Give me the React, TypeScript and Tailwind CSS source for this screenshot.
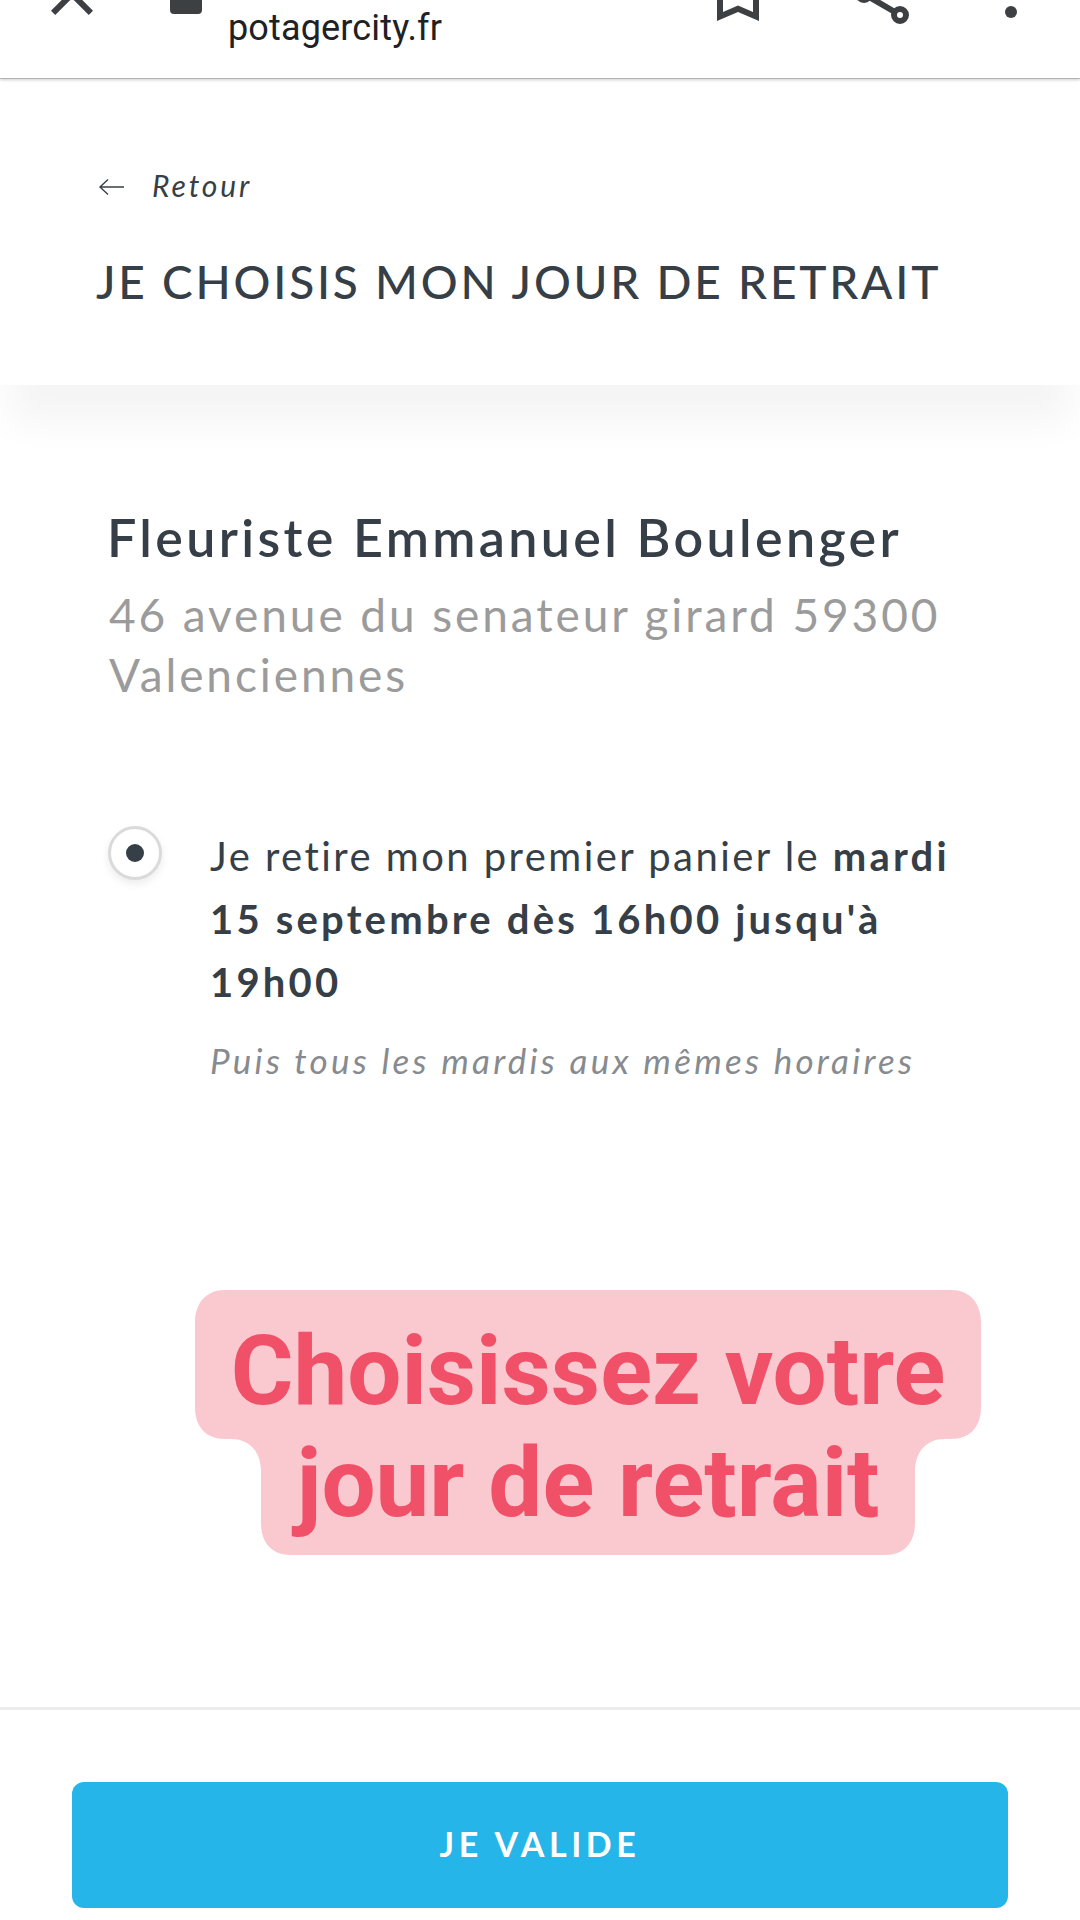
import type { ReactNode } from 'react';

function ToolbarIcon({ children }: { children: ReactNode }) {
  return (
    <svg viewBox="0 0 24 24" className="size-[72px] shrink-0 fill-[#3c4043]">
      {children}
    </svg>
  );
}

/** In-app browser bar, scrolled half out of view */
function BrowserBar() {
  return (
    <div className="relative z-10 h-[79px] border-b border-[#b3b3b3] bg-white shadow-[0_1px_3px_rgba(0,0,0,0.2)]">
      <div className="flex h-full items-start overflow-hidden pr-[33px] pl-9">
        <div className="-mt-[42px]">
          <ToolbarIcon>
            <path d="M19 6.41 17.59 5 12 10.59 6.41 5 5 6.41 10.59 12 5 17.59 6.41 19 12 13.41 17.59 19 19 17.59 13.41 12z" />
          </ToolbarIcon>
        </div>
        <svg viewBox="0 0 24 24" className="-mt-[30px] ml-[54px] size-12 shrink-0 fill-[#3c4043]">
          <path d="M18 8h-1V6A5 5 0 0 0 7 6v2H6a2 2 0 0 0-2 2v10a2 2 0 0 0 2 2h12a2 2 0 0 0 2-2V10a2 2 0 0 0-2-2zM9 6a3 3 0 0 1 6 0v2H9z" />
        </svg>
        <span className="mt-[6px] ml-[18px] flex-1 font-[Roboto,sans-serif] text-[36px] leading-[44px] tracking-[0.15px] text-[#202124]">
          potagercity.fr
        </span>
        <div className="-mt-[42px] flex">
          <ToolbarIcon>
            <path d="M17 3H7c-1.1 0-2 .9-2 2v16l7-3 7 3V5c0-1.1-.9-2-2-2zm0 15-5-2.18L7 18V5h10z" />
          </ToolbarIcon>
          <div className="ml-[72px]">
            <ToolbarIcon>
              <g className="fill-none stroke-[#3c4043] stroke-2">
                <circle cx="18" cy="5" r="2" />
                <circle cx="6" cy="12" r="2" />
                <circle cx="18" cy="19" r="2" />
                <path d="m7.7 11 8.6-5M7.7 13l8.6 5" />
              </g>
            </ToolbarIcon>
          </div>
          <div className="ml-[57px]">
            <ToolbarIcon>
              <circle cx="12" cy="6" r="2" />
              <circle cx="12" cy="12" r="2" />
              <circle cx="12" cy="18" r="2" />
            </ToolbarIcon>
          </div>
        </div>
      </div>
    </div>
  );
}

function Header() {
  return (
    <header className="h-[306px] bg-white pt-[88px] pl-24 shadow-[0_48px_36px_-10px_rgba(0,0,0,0.045)]">
      <a className="flex items-center text-[30px] leading-9 tracking-[2.9px] italic">
        <svg viewBox="0 0 26 18" className="mt-1 ml-[3px] h-[18px] w-[26px] fill-none stroke-current stroke-[1.4]">
          <path d="M25 9H1M9 1.5 1 9l8 7.5" />
        </svg>
        <span className="ml-[27px]">Retour</span>
      </a>
      <h1 className="mt-[51px] text-[46px] leading-[56px] font-medium tracking-[2.8px] whitespace-nowrap">
        JE CHOISIS MON JOUR DE RETRAIT
      </h1>
    </header>
  );
}

function Radio() {
  return (
    <span className="mt-[1px] flex size-[54px] shrink-0 items-center justify-center rounded-full border-[3px] border-[#dadada] bg-white shadow-[0_4px_9px_rgba(0,0,0,0.08)]">
      <span className="size-[18px] rounded-full bg-[#363f47]" />
    </span>
  );
}

/** Two-line caption with a stepped, rounded background */
function Caption() {
  return (
    <div className="relative ml-[195px] h-[265px] w-[786px]">
      <svg viewBox="0 0 786 265" className="absolute inset-0 h-full w-full fill-[#f9c9cf]">
        <path d="M30 0H756C775 0 786 13 786 33V117C786 137 775 149 756 149H750C731 149 720 162 720 182V233C720 253 709 265 690 265H96C77 265 66 253 66 233V182C66 162 55 149 36 149H30C11 149 0 137 0 117V33C0 13 11 0 30 0Z" />
      </svg>
      <p className="relative pt-[25px] text-center font-[Roboto,sans-serif] text-[96px] leading-[112px] font-bold text-[#f05068]">
        Choisissez votre
        <br />
        jour de retrait
      </p>
    </div>
  );
}

export default function App() {
  return (
    <div className="h-[1920px] w-[1080px] overflow-hidden bg-white font-[Lato,sans-serif] text-[#363f47]">
      <BrowserBar />
      <Header />

      <main className="h-[1322px] pt-[120px]">
        <section className="pl-[109px]">
          <h2 className="-ml-[2px] text-[52px] leading-[64px] font-semibold tracking-[3.35px]">
            Fleuriste Emmanuel Boulenger
          </h2>
          <p className="mt-4 w-[860px] text-[46px] leading-[60px] tracking-[2.9px] text-[#9b9b9b]">
            46 avenue du senateur girard 59300 Valenciennes
          </p>
        </section>

        <section className="mt-[120px] flex pl-[108px]">
          <Radio />
          <div className="ml-[48px] w-[770px]">
            <p className="text-[40px] leading-[63px] tracking-[2.45px]">
              Je retire mon premier panier le{' '}
              <strong className="font-bold tracking-[3.2px]">
                mardi
                <br />
                15 septembre dès 16h00 jusqu'à
                <br />
                19h00
              </strong>
            </p>
            <p className="mt-6 text-[35px] leading-[44px] tracking-[3.25px] text-[#878b8f] italic">
              Puis tous les mardis aux mêmes horaires
            </p>
          </div>
        </section>

        <div className="mt-[208px]">
          <Caption />
        </div>
      </main>

      <footer className="border-t-[3px] border-[#ececec] px-[72px] pt-[72px]">
        <button className="h-[126px] w-full rounded-xl bg-[#26b5e8] pb-[4px] text-[34px] font-bold tracking-[4.6px] text-white">
          JE VALIDE
        </button>
      </footer>
    </div>
  );
}
